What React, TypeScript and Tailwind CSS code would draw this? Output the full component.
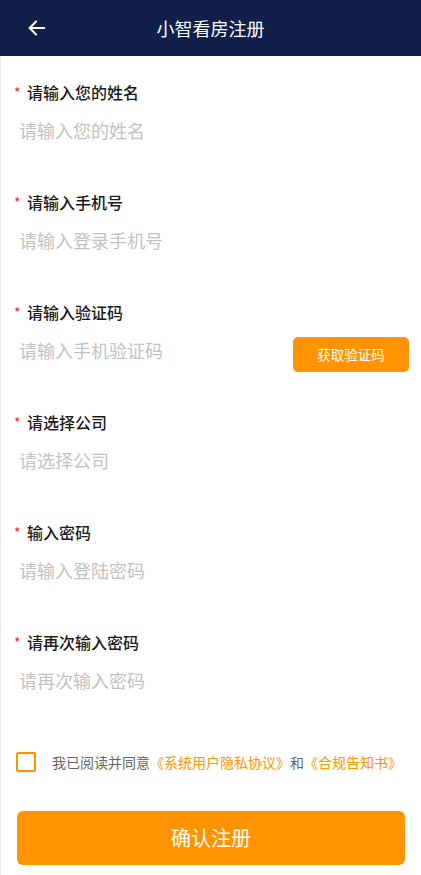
import React from "react";

const FONT = { fontFamily: '"Noto Sans CJK SC", "Noto Sans", sans-serif' };

function Field({ label, placeholder, required = true, button }: { label: string; placeholder: string; required?: boolean; button?: boolean }) {
  return (
    <div className="flex flex-col pb-[49px]">
      <div className="flex items-center h-[22px] pl-[13px]">
        <span className={"w-[13px] text-[#ff2020] text-[14px] leading-[22px] " + (required ? "" : "invisible")}>*</span>
        <span className="text-[16px] leading-[22px] font-medium text-[#1a1a1a]">{label}</span>
      </div>
      <div className="flex h-6 mt-[15px] pl-[18px] pr-[12px] justify-between items-start">
        <span className="text-[18px] leading-6 text-[#c2c2c2]">{placeholder}</span>
        {button && (
          <button className="-mt-px h-[35px] w-[116px] shrink-0 rounded-[5px] bg-[#ff9300] text-white text-[13.5px]">获取验证码</button>
        )}
      </div>
    </div>
  );
}

export default function App() {
  return (
    <div className="w-[421px] h-[875px] bg-white overflow-hidden" style={FONT}>
      <div className="h-[56px] bg-[#111f4b] flex items-center relative">
        <svg className="absolute left-[26px] top-[17px]" width="22" height="22" viewBox="0 0 24 24" fill="none" stroke="white" strokeWidth="2.2" strokeLinecap="round" strokeLinejoin="round">
          <path d="M20 12H4" />
          <path d="M11 5l-7 7 7 7" />
        </svg>
        <div className="flex-1 text-center text-white text-[18px] leading-none">小智看房注册</div>
      </div>
      <div className="border-l border-[#e8e8e8] h-[819px] flex flex-col pt-[25px]">
        <Field label="请输入您的姓名" placeholder="请输入您的姓名" />
        <Field label="请输入手机号" placeholder="请输入登录手机号" />
        <Field label="请输入验证码" placeholder="请输入手机验证码" button />
        <Field label="请选择公司" placeholder="请选择公司" />
        <Field label="输入密码" placeholder="请输入登陆密码" />
        <Field label="请再次输入密码" placeholder="请再次输入密码" />
        <div className="flex items-center h-[20px] mt-[11px] pl-[15px]">
          <div className="w-[20px] h-[20px] border-2 border-[#ff9300] rounded-[2px] shrink-0" />
          <div className="ml-[16px] text-[14px] whitespace-nowrap text-[#666666]">
            我已阅读并同意<span className="text-[#ff9300]">《系统用户隐私协议》</span>和<span className="text-[#ff9300]">《合规告知书》</span>
          </div>
        </div>
        <button className="mt-[39px] mx-[16px] h-[54px] rounded-[6px] bg-[#ff9300] text-white text-[20px]">确认注册</button>
      </div>
    </div>
  );
}
